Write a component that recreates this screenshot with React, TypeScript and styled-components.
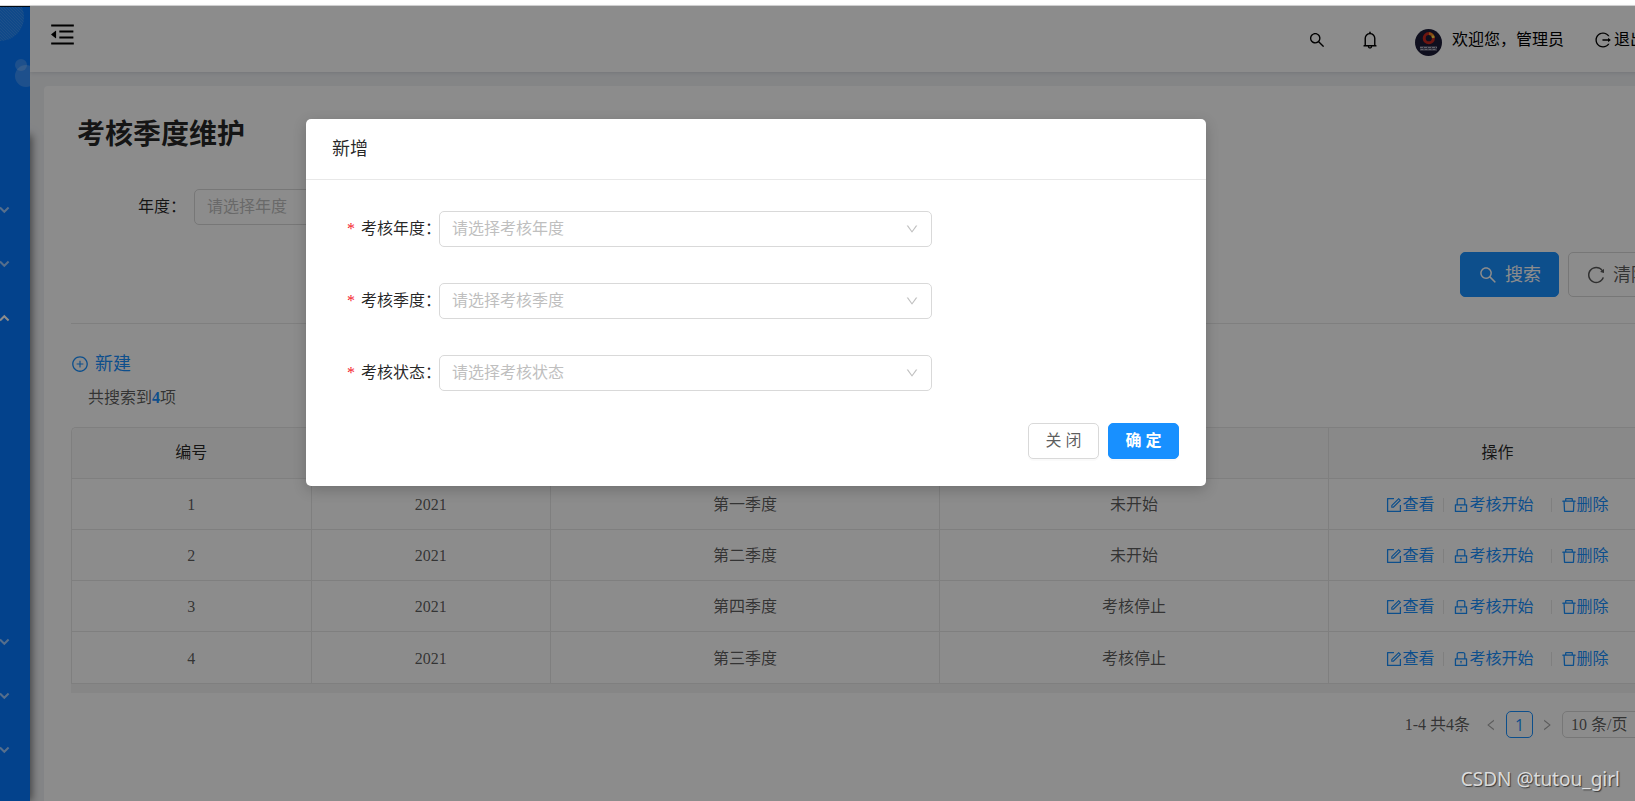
import React from "react";
import styled, { createGlobalStyle, css } from "styled-components";
import {
  AiOutlineBell,
  AiOutlineDelete,
  AiOutlineDown,
  AiOutlineForm,
  AiOutlineLeft,
  AiOutlineLock,
  AiOutlineLogout,
  AiOutlineMenuFold,
  AiOutlinePlusCircle,
  AiOutlineReload,
  AiOutlineRight,
  AiOutlineSearch,
} from "react-icons/ai";

const GlobalStyle = createGlobalStyle`
  *, *::before, *::after { box-sizing: border-box; }
  body {
    margin: 0;
    background: #fff;
    color: rgba(0, 0, 0, 0.65);
    font: 16px/24px "Liberation Serif", "Noto Sans CJK SC", serif;
  }
  button, select, input { font: inherit; color: inherit; margin: 0; }
  button { cursor: pointer; }
  svg { display: block; flex: none; }
  a { color: inherit; text-decoration: none; }
`;

const BLUE = "#1890ff";
const LINE = "#e8e8e8";

const Page = styled.div`
  position: relative;
  min-height: 100vh;
  padding-top: 5px;
  overflow: hidden;
  display: flex;
  flex-direction: column;
`;

/* The application is wider than the window: its right edge runs out of view. */
const Frame = styled.div`
  position: relative;
  flex: 1;
  display: flex;
  width: calc(100% + 73px);
  border-top: 1px solid #d4d4d4;
  background: #f0f2f5;
`;

const Sidebar = styled.aside`
  position: relative;
  z-index: 1;
  flex: none;
  width: 30px;
  display: flex;
  flex-direction: column;
  background: #0678ff;
  border-top: 1px solid #001529;
`;

const Bubbles = styled.svg`
  position: relative;
  z-index: 1;
  width: 30px;
  height: 128px;
  background: #0678ff;
`;

const Menu = styled.nav`
  flex: 1;
  display: flex;
  flex-direction: column;
  padding-top: 48px;
  background: #0678ff;
  box-shadow: 2px 0 8px rgba(0, 0, 0, 0.5);
`;

const MenuItem = styled.button<{ $open?: boolean }>`
  height: 54px;
  padding: 0;
  border: 0;
  background: none;
  overflow: hidden;
  color: ${(p) => (p.$open ? "#fff" : "rgba(255, 255, 255, 0.6)")};
`;

const SubMenu = styled.div`
  height: 270px;
`;

const Main = styled.div`
  flex: 1;
  min-width: 0;
  display: flex;
  flex-direction: column;
`;

const TopBar = styled.header`
  height: 66px;
  padding: 0 30px 0 18px;
  display: flex;
  align-items: center;
  justify-content: space-between;
  background: #fff;
  color: #000;
  box-shadow: 0 1px 4px rgba(0, 21, 41, 0.12);
`;

const IconButton = styled.button`
  display: flex;
  padding: 0;
  border: 0;
  background: none;
`;

const Fold = styled(IconButton)`
  padding-bottom: 10px;
`;

const TopTools = styled.div`
  display: flex;
  align-items: center;
  padding-top: 2px;
`;

const Bell = styled(IconButton)`
  margin: 0 35px 0 34px;
`;

const User = styled.a`
  display: flex;
  align-items: center;
  gap: 10px;
  margin-right: 30px;

  & > svg {
    margin-top: 4px;
  }
`;

const Logout = styled.a`
  display: flex;
  align-items: center;
  gap: 2px;
`;

const Card = styled.main`
  flex: 1;
  margin: 14px 14px 0;
  padding: 29px 27px 27px;
  border-radius: 4px 4px 0 0;
  background: #fff;
`;

const Title = styled.h1`
  margin: 0 0 34px;
  padding-left: 6px;
  font-size: 28px;
  line-height: 40px;
  font-weight: 700;
  color: rgba(0, 0, 0, 0.85);
`;

const Filter = styled.div`
  display: flex;
  align-items: center;
  padding-left: 67px;
  color: rgba(0, 0, 0, 0.85);
`;

const FilterLabel = styled.label`
  width: 56px;
`;

const SelectShell = styled.span<{ $width: number }>`
  display: grid;
  align-items: center;
  width: ${(p) => p.$width}px;

  & > * {
    grid-area: 1 / 1;
  }
  & > svg {
    justify-self: end;
    margin-right: 13px;
    color: rgba(0, 0, 0, 0.25);
    pointer-events: none;
  }
`;

const SelectBox = styled.select<{ $small?: boolean }>`
  appearance: none;
  width: 100%;
  height: ${(p) => (p.$small ? 27 : 36)}px;
  padding: 0 ${(p) => (p.$small ? 8 : 12)}px;
  border: 1px solid #d9d9d9;
  border-radius: 5px;
  background: #fff;
  line-height: 24px;
  color: ${(p) => (p.$small ? "rgba(0, 0, 0, 0.65)" : "#bfbfbf")};
`;

const FilterActions = styled.div`
  display: flex;
  justify-content: flex-end;
  gap: 9px;
  padding: 27px 0 26px;
  border-bottom: 1px solid ${LINE};
`;

const Button = styled.button<{ $primary?: boolean; $large?: boolean }>`
  display: flex;
  align-items: center;
  justify-content: center;
  gap: 7px;
  border: 1px solid #d9d9d9;
  border-radius: 5px;
  background: #fff;
  ${(p) =>
    p.$large
      ? css`
          width: 99px;
          height: 45px;
          font-size: 18px;
        `
      : css`
          width: 71px;
          height: 36px;
          box-shadow: 0 2px 0 rgba(0, 0, 0, 0.02);
        `}
  ${(p) =>
    p.$primary &&
    css`
      border-color: ${BLUE};
      background: ${BLUE};
      color: #fff;
    `}
`;

const NewButton = styled.button`
  display: flex;
  align-items: center;
  gap: 6px;
  margin-top: 26px;
  padding: 0;
  border: 0;
  background: none;
  font-size: 18px;
  line-height: 28px;
  color: ${BLUE};
`;

const Count = styled.p`
  margin: 8px 0 17px;
  padding-left: 17px;

  strong {
    color: ${BLUE};
  }
`;

const Table = styled.table`
  width: 100%;
  table-layout: fixed;
  border-collapse: separate;
  border-spacing: 0;
  border: solid ${LINE};
  border-width: 1px 0 0 1px;
  border-radius: 5px 5px 0 0;
  text-align: center;

  th,
  td {
    height: 51px;
    padding: 0;
    border: solid ${LINE};
    border-width: 0 1px 1px 0;
  }
  td {
    padding-top: 2px;
  }
  tr:last-child td {
    height: 52px;
  }
  th {
    font-weight: 400;
    color: rgba(0, 0, 0, 0.85);
    background: #fafafa;
  }
  th:first-child {
    border-top-left-radius: 5px;
  }
`;

const TableFoot = styled.div`
  height: 9px;
  background: #f4f4f4;
`;

const Actions = styled.div`
  display: flex;
  justify-content: center;
  align-items: center;
  color: ${BLUE};
`;

const ActionLink = styled.a<{ $wide?: boolean }>`
  display: flex;
  align-items: center;
  padding-right: ${(p) => (p.$wide ? 8 : 0)}px;

  & > svg {
    margin: 0 -1px;
  }
`;

const Bar = styled.span`
  width: 1px;
  height: 14px;
  margin: 0 9px;
  background: ${LINE};
`;

const Pager = styled.div`
  display: flex;
  justify-content: flex-end;
  align-items: center;
  margin-top: 18px;
`;

const PageArrow = styled(IconButton)`
  margin: 0 8px 0 7px;
  color: rgba(0, 0, 0, 0.35);
`;

const PageNumber = styled.button`
  width: 27px;
  height: 27px;
  padding: 0;
  border: 1px solid ${BLUE};
  border-radius: 5px;
  background: #fff;
  color: ${BLUE};
  font-family: "Open Sans", sans-serif;
`;

const Total = styled.span`
  margin-right: 7px;
`;

const Overlay = styled.div`
  position: absolute;
  z-index: 2;
  inset: 0;
  display: flex;
  justify-content: center;
  align-items: flex-start;
  padding: 113px 196px 0 0;
  background: rgba(0, 0, 0, 0.45);
`;

const Dialog = styled.section`
  width: 900px;
  border-radius: 5px;
  background: #fff;
  box-shadow: 0 4px 14px rgba(0, 0, 0, 0.2);
`;

const DialogTitle = styled.h2`
  margin: 0;
  padding: 18px 26px;
  border-bottom: 1px solid ${LINE};
  font-size: 18px;
  line-height: 24px;
  font-weight: 400;
  color: rgba(0, 0, 0, 0.85);
`;

const Form = styled.form`
  display: flex;
  flex-direction: column;
  gap: 36px;
  padding: 31px 27px 27px;
`;

const Field = styled.div`
  display: flex;
  align-items: center;
`;

const FieldLabel = styled.label`
  width: 106px;
  padding-left: 14px;
  display: flex;
  gap: 6px;
  white-space: nowrap;
  color: rgba(0, 0, 0, 0.85);
`;

const Star = styled.span`
  color: #f5222d;
`;

const DialogActions = styled.div`
  display: flex;
  justify-content: flex-end;
  gap: 9px;
  margin-top: -4px;
`;

const Strong = styled.span`
  font-weight: 700;
`;

const Watermark = styled.div`
  position: absolute;
  z-index: 3;
  right: 15px;
  bottom: 8px;
  font: 19px/28px "Noto Sans", sans-serif;
  color: rgba(235, 235, 235, 0.9);
  text-shadow: 1px 1px 1px rgba(0, 0, 0, 0.6);
`;

function Chevron({ up }: { up?: boolean }) {
  return (
    <svg width="10" height="8" viewBox="0 0 10 8" fill="none" stroke="currentColor" strokeWidth="2">
      <path d={up ? "M0 6.5 4.3 2.2 8.6 6.5" : "M0 1.5 4.3 5.8 8.6 1.5"} />
    </svg>
  );
}

function Avatar() {
  return (
    <svg width="27" height="27" viewBox="0 0 27 27">
      <circle cx="13.5" cy="13.5" r="13.5" fill="#1c1c38" />
      <circle cx="13.8" cy="9.2" r="4.6" fill="none" stroke="#c8281e" strokeWidth="3" />
      <path d="M14 4.6A4.6 4.6 0 0 1 18.4 9" fill="none" stroke="#f08a24" strokeWidth="2.8" />
      <circle cx="18" cy="7.8" r="1.4" fill="#ffe04a" />
      <path d="M5 17h17v5H5z" fill="#8c8ca0" opacity="0.5" />
      <path d="M5 18.5h17M5.5 20.5h16" stroke="#b4b4c4" strokeWidth="1.2" strokeDasharray="3 1" />
    </svg>
  );
}

function Dropdown(props: { id: string; text: string; width: number }) {
  return (
    <SelectShell $width={props.width}>
      <SelectBox id={props.id}>
        <option>{props.text}</option>
      </SelectBox>
      <AiOutlineDown size={14} />
    </SelectShell>
  );
}

const rows = [
  { id: 1, year: 2021, quarter: "第一季度", state: "未开始" },
  { id: 2, year: 2021, quarter: "第二季度", state: "未开始" },
  { id: 3, year: 2021, quarter: "第四季度", state: "考核停止" },
  { id: 4, year: 2021, quarter: "第三季度", state: "考核停止" },
];

const fields = [
  { id: "year", label: "考核年度" },
  { id: "quarter", label: "考核季度" },
  { id: "state", label: "考核状态" },
];

export default function App() {
  return (
    <Page>
      <GlobalStyle />
      <Frame>
        <Sidebar>
          <Bubbles viewBox="0 0 30 128">
            <defs>
              <pattern id="hatch" width="3" height="3" patternUnits="userSpaceOnUse">
                <path d="M0 0 3 3" stroke="#5aa6ff" strokeWidth="0.8" />
              </pattern>
            </defs>
            <circle cx="0" cy="10" r="24" fill="#1e86fa" />
            <circle cx="0" cy="10" r="24" fill="url(#hatch)" opacity="0.5" />
            <circle cx="21" cy="58" r="6" fill="#fff" opacity="0.2" />
            <circle cx="26" cy="69" r="11" fill="#fff" opacity="0.2" />
          </Bubbles>
          <Menu>
            <MenuItem><Chevron /></MenuItem>
            <MenuItem><Chevron /></MenuItem>
            <MenuItem $open><Chevron up /></MenuItem>
            <SubMenu />
            <MenuItem><Chevron /></MenuItem>
            <MenuItem><Chevron /></MenuItem>
            <MenuItem><Chevron /></MenuItem>
          </Menu>
        </Sidebar>
        <Main>
          <TopBar>
            <Fold><AiOutlineMenuFold size={29} /></Fold>
            <TopTools>
              <IconButton><AiOutlineSearch size={18} /></IconButton>
              <Bell><AiOutlineBell size={20} /></Bell>
              <User href="#">
                <Avatar />
                欢迎您，管理员
              </User>
              <Logout href="#">
                <AiOutlineLogout size={18} />
                退出登录
              </Logout>
            </TopTools>
          </TopBar>
          <Card>
            <Title>考核季度维护</Title>
            <Filter>
              <FilterLabel htmlFor="filter-year">年度：</FilterLabel>
              <Dropdown id="filter-year" text="请选择年度" width={300} />
            </Filter>
            <FilterActions>
              <Button $primary $large><AiOutlineSearch size={20} />搜索</Button>
              <Button $large><AiOutlineReload size={20} />清除</Button>
            </FilterActions>
            <NewButton><AiOutlinePlusCircle size={18} />新建</NewButton>
            <Count>共搜索到<strong>4</strong>项</Count>
            <Table>
              <colgroup>
                <col />
                <col />
                <col width="389" />
                <col width="389" />
                <col width="338" />
              </colgroup>
              <thead>
                <tr>
                  <th>编号</th>
                  <th>年度</th>
                  <th>季度</th>
                  <th>状态</th>
                  <th>操作</th>
                </tr>
              </thead>
              <tbody>
                {rows.map((row) => (
                  <tr key={row.id}>
                    <td>{row.id}</td>
                    <td>{row.year}</td>
                    <td>{row.quarter}</td>
                    <td>{row.state}</td>
                    <td>
                      <Actions>
                        <ActionLink href="#"><AiOutlineForm size={18} />查看</ActionLink>
                        <Bar />
                        <ActionLink href="#" $wide><AiOutlineLock size={18} />考核开始</ActionLink>
                        <Bar />
                        <ActionLink href="#"><AiOutlineDelete size={18} />删除</ActionLink>
                      </Actions>
                    </td>
                  </tr>
                ))}
              </tbody>
            </Table>
            <TableFoot />
            <Pager>
              <Total>1-4 共4条</Total>
              <PageArrow><AiOutlineLeft size={14} /></PageArrow>
              <PageNumber>1</PageNumber>
              <PageArrow><AiOutlineRight size={14} /></PageArrow>
              <SelectShell $width={105}>
                <SelectBox $small aria-label="10 条/页">
                  <option>10 条/页</option>
                </SelectBox>
                <AiOutlineDown size={14} />
              </SelectShell>
            </Pager>
          </Card>
        </Main>
        <Overlay>
          <Dialog role="dialog" aria-labelledby="dialog-title">
            <DialogTitle id="dialog-title">新增</DialogTitle>
            <Form>
              {fields.map((field) => (
                <Field key={field.id}>
                  <FieldLabel htmlFor={field.id}>
                    <Star>*</Star>
                    {field.label}：
                  </FieldLabel>
                  <Dropdown id={field.id} text={"请选择" + field.label} width={493} />
                </Field>
              ))}
              <DialogActions>
                <Button type="button">关 闭</Button>
                <Button type="button" $primary><Strong>确 定</Strong></Button>
              </DialogActions>
            </Form>
          </Dialog>
        </Overlay>
      </Frame>
      <Watermark>CSDN @tutou_girl</Watermark>
    </Page>
  );
}
